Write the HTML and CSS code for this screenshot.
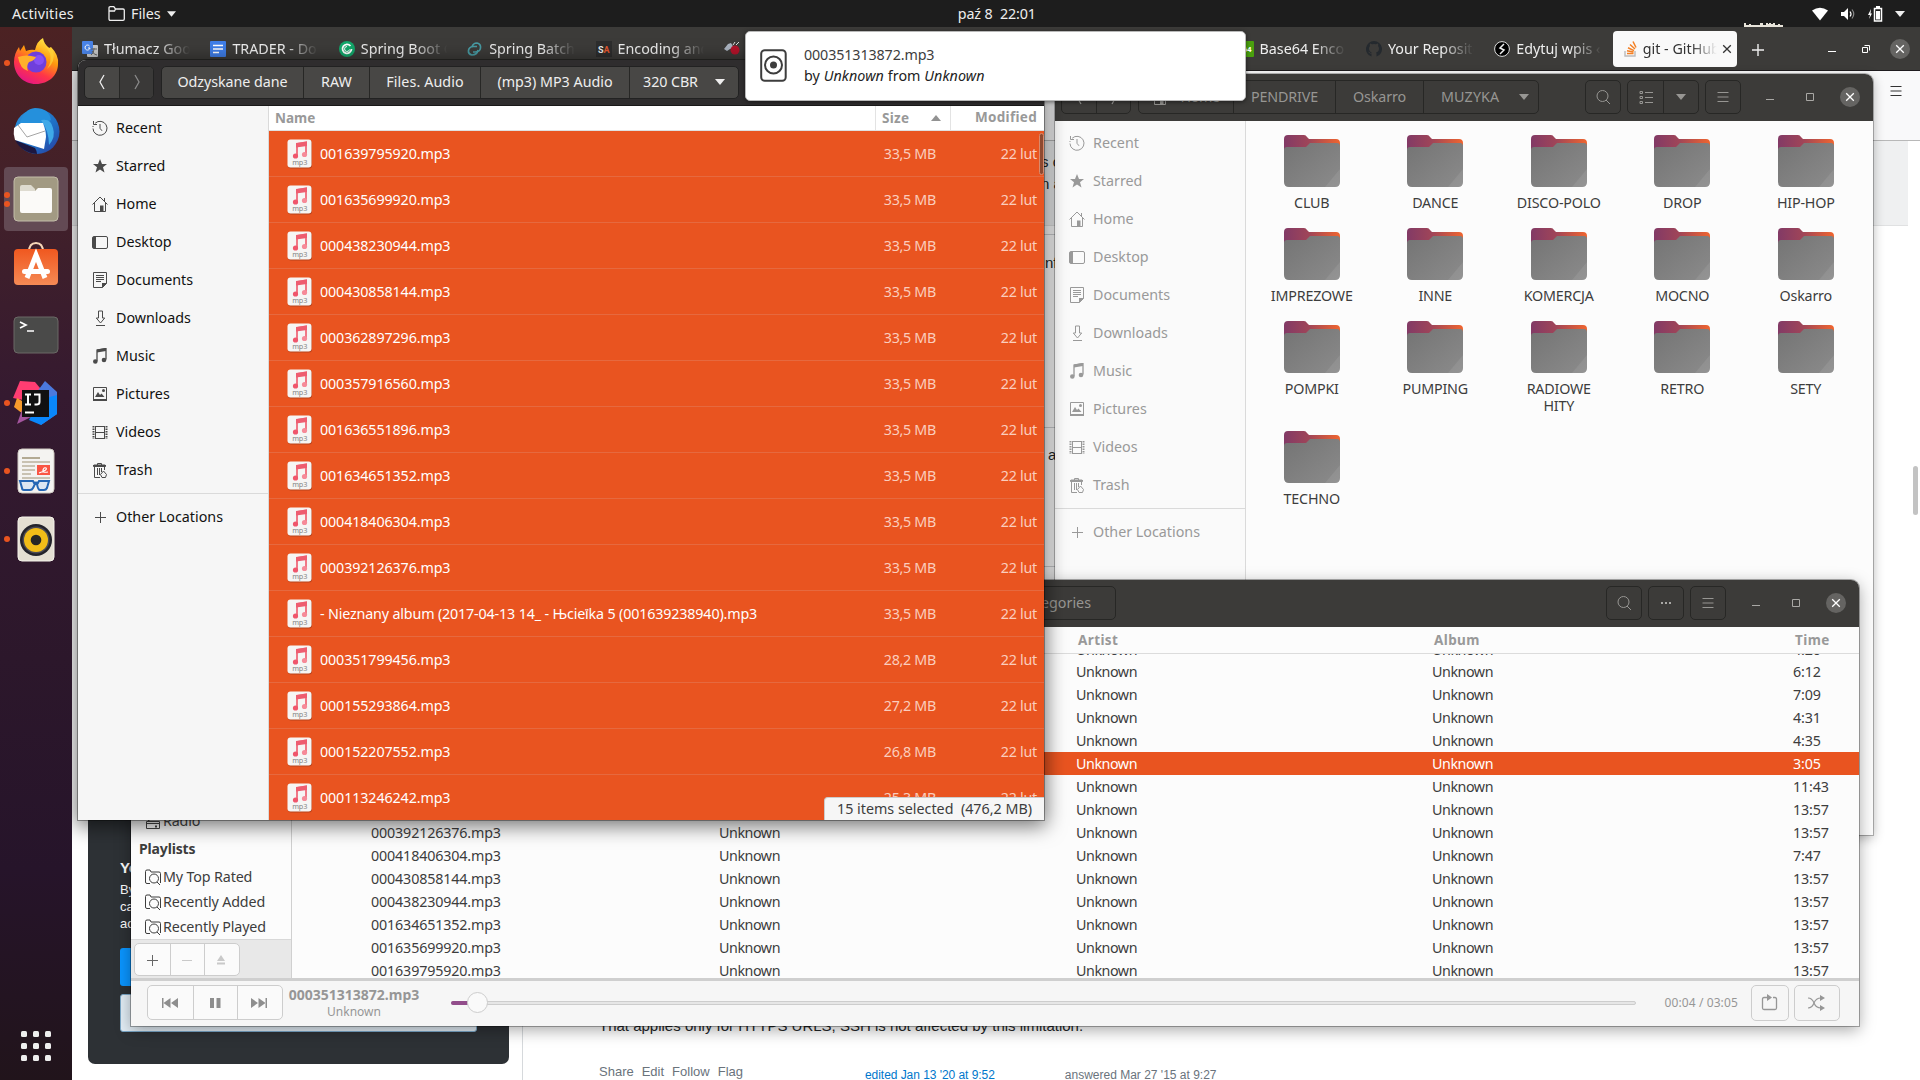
FILE: index.html
```html
<!DOCTYPE html>
<html lang="en">
<head>
<meta charset="utf-8">
<title>Desktop</title>
<link rel="stylesheet" href="styles.css">
</head>
<body>
<svg class="sprite" xmlns="http://www.w3.org/2000/svg">
  <defs>
    <linearGradient id="gBack" x1="0" y1="0" x2="1" y2="0"><stop offset="0" stop-color="#823a66"/><stop offset=".45" stop-color="#a04558"/><stop offset="1" stop-color="#f0652f"/></linearGradient>
    <linearGradient id="gFront" x1="0" y1="0" x2="1" y2="1"><stop offset="0" stop-color="#747474"/><stop offset="1" stop-color="#8b8b8b"/></linearGradient>
    <linearGradient id="gFox" x1=".8" y1="0" x2=".3" y2="1"><stop offset="0" stop-color="#fff44f"/><stop offset=".4" stop-color="#ff980e"/><stop offset=".7" stop-color="#ff3647"/><stop offset="1" stop-color="#e31587"/></linearGradient>
    <linearGradient id="gOr" x1="0" y1="0" x2="0" y2="1"><stop offset="0" stop-color="#f0581f"/><stop offset="1" stop-color="#f58a55"/></linearGradient>
    <linearGradient id="gTb" x1="0" y1="0" x2="1" y2="1"><stop offset="0" stop-color="#2c93dc"/><stop offset=".6" stop-color="#1f6fc4"/><stop offset="1" stop-color="#2a3a9c"/></linearGradient>
  </defs>
  <symbol id="recent" viewBox="0 0 16 16"><g fill="none" stroke="currentColor"><path d="M3.2 3.2A7 7 0 1 1 1 8.500" /><path d="M8 4v4.300l2 2.500"/><path d="M1.500 1v3.500H5" /><path d="M1 6v1.500" stroke-dasharray="1"/></g></symbol>
  <symbol id="star" viewBox="0 0 16 16"><path fill="currentColor" d="M8 1l2 5h5l-4 3.300 1.500 5.200L8 11.500l-4.500 3L5 9.300 1 6h5z"/></symbol>
  <symbol id="home" viewBox="0 0 16 16"><path fill="none" stroke="currentColor" d="M.500 8.500L8 1l7.500 7.500M2.500 7v8.500h11V7M12.500 2v3"/><path fill="currentColor" d="M8 9.500h3.500V16H8z"/></symbol>
  <symbol id="desktop" viewBox="0 0 16 16"><rect x=".5" y="2.500" width="15" height="12" rx="1.500" fill="none" stroke="currentColor"/><path fill="currentColor" d="M1 3h3v11H1z"/></symbol>
  <symbol id="doc" viewBox="0 0 16 16"><path fill="none" stroke="currentColor" d="M1.500.5h13v11l-4 4h-9zM4 3.500h8M4 5.500h8M4 7.500h8M4 9.500h5"/><path fill="currentColor" d="M10 16v-5h5z"/></symbol>
  <symbol id="down" viewBox="0 0 16 16"><path fill="none" stroke="currentColor" d="M6.500 1h4v7h2.200L8.500 13 4.300 8h2.200zM4 15.500h9"/></symbol>
  <symbol id="music" viewBox="0 0 16 16"><path fill="none" stroke="currentColor" stroke-width="1.300" d="M5 13V2l9-1.500v11"/><path fill="currentColor" d="M5 1.500L14 0v3L5 4.500z"/><circle cx="3.300" cy="13.500" r="2.300" fill="currentColor"/><circle cx="12" cy="12" r="2.300" fill="currentColor"/></symbol>
  <symbol id="pic" viewBox="0 0 16 16"><path fill="none" stroke="currentColor" d="M1.500 1.500h13v13h-13z"/><path fill="currentColor" d="M1 13h14v2H1zM3 11l3-5 2 3 1.500-1.500L12.500 11z"/><circle cx="11.500" cy="4.500" r="1.500" fill="currentColor"/></symbol>
  <symbol id="video" viewBox="0 0 16 16"><path fill="none" stroke="currentColor" d="M3.500 2v13M12.500 2v13M3.500 2.500h9M3.500 8.500h9M3.500 14.500h9"/><path fill="none" stroke="currentColor" stroke-dasharray="1.500 1" stroke-width="2" d="M1.500 2v13M14.500 2v13"/></symbol>
  <symbol id="trash" viewBox="0 0 16 16"><path fill="none" stroke="currentColor" d="M1 3.500h13M2.500 5v10.500H8M12.500 5v3M5.500 3V1.500h4V3M5.500 6v7M7.500 6v7M9.500 6v4"/><path fill="currentColor" d="M2 2.500h11L14 5H1z"/><path fill="none" stroke="currentColor" d="M8.500 12.500l3-3.500 3 3.500-1 3H10z"/></symbol>
  <symbol id="plus" viewBox="0 0 16 16"><path fill="none" stroke="currentColor" d="M8.500 3v11M3 8.500h11"/></symbol>
  <symbol id="search" viewBox="0 0 16 16"><circle cx="7.500" cy="7" r="5.500" fill="none" stroke="currentColor"/><path stroke="currentColor" d="M11 11l4 4"/></symbol>
  <symbol id="menu" viewBox="0 0 16 16"><path fill="none" stroke="currentColor" d="M2.500 3.500h11M2.500 8h11M2.500 12.500h11"/></symbol>
  <symbol id="list" viewBox="0 0 16 16"><path fill="none" stroke="currentColor" d="M2 2.500h2.500v2H2zM2 7.500h2.500v2H2zM2 12.500h2.500v2H2zM7 3.500h8M7 8.500h8M7 13.500h8"/></symbol>
  <symbol id="min" viewBox="0 0 16 16"><path stroke="currentColor" d="M4 10.500h8"/></symbol>
  <symbol id="max" viewBox="0 0 16 16"><path fill="none" stroke="currentColor" d="M4.500 4.500h7v7h-7z"/></symbol>
  <symbol id="restore" viewBox="0 0 16 16"><path fill="none" stroke="currentColor" d="M4.500 6.500h5v5h-5zM6.500 4.500h5v5"/></symbol>
  <symbol id="close" viewBox="0 0 16 16"><path stroke="currentColor" stroke-width="1.300" d="M4.200 4.200l7.600 7.600M11.800 4.200l-7.600 7.600"/></symbol>
  <symbol id="left" viewBox="0 0 16 16"><path fill="none" stroke="currentColor" stroke-width="1.300" d="M10 1L6 8l4 7"/></symbol>
  <symbol id="right" viewBox="0 0 16 16"><path fill="none" stroke="currentColor" stroke-width="1.300" d="M6 1l4 7-4 7"/></symbol>
  <symbol id="tri" viewBox="0 0 10 6"><path fill="currentColor" d="M0 0h10L5 6z"/></symbol>
  <symbol id="folder" viewBox="0 0 56 52">
    <path fill="url(#gBack)" d="M0 4q0-4 4-4h16q2 0 3 2l2 2h27q4 0 4 4v20H0z"/>
    <path fill="url(#gFront)" d="M0 15q0-3 3-3h19l4-4h27q3 0 3 3v36q0 5-5 5H5q-5 0-5-5z"/>
    <path fill="#fff" opacity=".08" d="M56 34v13q0 5-5 5H41z"/>
  </symbol>
  <symbol id="mp3" viewBox="0 0 26 30"><rect x="1" y="1" width="24" height="28.500" rx="3" fill="#b8421b"/><rect x=".5" y=".5" width="24" height="28" rx="3" fill="#f6f5f4"/><path fill="none" stroke="#f07886" stroke-width="2" d="M10 17V5l9-1.500V15"/><path fill="#ee5d70" d="M9 4l11-1.500V7L9 8.500z"/><circle cx="8.500" cy="17" r="2.600" fill="#f0566b"/><circle cx="17.500" cy="15.500" r="2.600" fill="#f68a98"/><text x="12.700" y="25.500" text-anchor="middle" font-family="Noto Sans, sans-serif" font-size="7.300" fill="#858585">mp3</text></symbol>
  <symbol id="smart" viewBox="0 0 16 16"><path fill="none" stroke="currentColor" d="M5 14.500H2q-1.500 0-1.500-1.500V2.500Q.500 1 2 1h3l1 2h8q1.500 0 1.500 1.500V14"/><circle cx="9" cy="9.500" r="4.500" fill="none" stroke="currentColor"/><path stroke="currentColor" d="M12 13l3 3"/></symbol>
</svg>

<header class="topbar">
  <span class="activities">Activities</span>
  <span class="appmenu"><svg width="17" height="15" viewBox="0 0 17 15"><path fill="none" stroke="#eee" stroke-width="1.300" d="M1 13V2q0-1.300 1.300-1.300h3.500L7.500 3H15q1.300 0 1.300 1.300V13q0 1.300-1.300 1.300H2.300Q1 14.300 1 13zM1 5h5.500l1-2"/></svg>Files<svg width="9" height="6"><use href="#tri"/></svg></span>
  <span class="clock">paź 8&nbsp; 22:01</span>
  <svg class="glitch" width="40" height="4" viewBox="0 0 40 4"><path fill="#e8e4da" d="M0 0h2v2h3V1h2v1h9V0h3v2h3V0h2v1h1V0h2v1h2V0h2v2h3V1h2v1h3v2H0z"/></svg>
  <span class="tray">
    <svg width="16" height="14" viewBox="0 0 16 14"><path fill="#fff" d="M0 3.500Q8-2 16 3.500L8 13.500z"/></svg>
    <svg width="16" height="14" viewBox="0 0 16 14"><path fill="#fff" d="M1 5h3l4-4v12L4 9H1z"/><path fill="none" stroke="#fff" stroke-width="1.200" d="M10 4.500q2 2.500 0 5"/><path fill="none" stroke="#888" stroke-width="1.200" d="M12 2.500q3.500 4.500 0 9"/></svg>
    <svg width="15" height="16" viewBox="0 0 15 16"><path fill="none" stroke="#fff" stroke-width="1.500" d="M6.500 2.500h7v12.500h-7z"/><path fill="#fff" d="M8 0h4v2H8zM8 5h4v8.500H8zM3 3L0 9h2l-1 4 3-5.500H2.500z"/></svg>
    <svg width="10" height="6"><use href="#tri"/></svg>
  </span>
</header>

<nav class="dock">
  <div class="slot up1"><i class="dots"><b></b></i><svg width="46" height="47" viewBox="0 0 46 47"><path fill="url(#gFox)" d="M23 46C10 46 1 36 1 24 1 18 3 13 6 9l1 4 4-6 2 6q5-2 9-1 2-9 8-12 1 6 6 10l2-1q8 8 7 17C45 37 36 46 23 46z"/><circle cx="23" cy="24" r="10.500" fill="#6f3fdc"/><circle cx="26" cy="22" r="5" fill="#9059ff" opacity=".7"/><path fill="#ffb02b" d="M5 19q8-3 18 0-2 4-7 5-3 4-1 9-8-2-10-14z"/><path fill="#ffd43a" opacity=".7" d="M30 1q3 9 7 14 2 9-3 16 9-7 6-19-8-3-10-11z"/></svg></div>
  <div class="slot"><svg width="50" height="50" viewBox="0 0 50 50"><circle cx="26" cy="25.500" r="22.500" fill="url(#gTb)"/><path fill="#2590dc" d="M9 17Q13 3 24 2q14 0 16 12l-8 4z"/><path fill="#3fa9e8" d="M30 14q10-2 12 8 3 9-4 17 0-14-8-25z"/><path fill="#1c1740" d="M4 34l20 8q2 3 2 6Q11 47 4 34z"/><path fill="#fff" d="M3 22l7-5 22 0q3 8 3 14l-2 12L4 34q-2-6-1-12z"/><path fill="none" stroke="#a5a5a5" stroke-width="1" d="M7 19l9 12 18-6"/></svg></div>
  <div class="slot active"><i class="dots"><b></b><b></b></i><svg width="46" height="46" viewBox="0 0 46 46"><rect x="1" y="1" width="44" height="44" rx="4" fill="#a29a83" stroke="#c3bda9"/><path fill="#dedbd0" d="M7 11q0-2 2-2h9l4 4v6H7z"/><path fill="#fbfaf8" d="M7 15h15l3-3h12q2 0 2 2v21q0 2-2 2H9q-2 0-2-2z"/></svg></div>
  <div class="slot up3"><svg width="46" height="46" viewBox="0 0 46 46"><path fill="none" stroke="#f7d7b8" stroke-width="2" d="M16 11q0-9 7-9t7 9"/><rect x="1" y="8" width="44" height="36" rx="4" fill="url(#gOr)"/><path fill="none" stroke="#fff" stroke-width="5" d="M14 37l9-23 9 23"/><rect x="9" y="28" width="28" height="5" rx="2.500" fill="#fff"/></svg></div>
  <div class="slot"><svg width="46" height="38" viewBox="0 0 46 38"><rect x="1" y="1" width="44" height="36" rx="4" fill="#4a4a49" stroke="#6b6966"/><path fill="none" stroke="#fff" stroke-width="1.700" d="M7 6l6 3-6 3M14 15h7"/></svg></div>
  <div class="slot"><i class="dots"><b></b></i><svg width="46" height="46" viewBox="0 0 46 46"><path fill="#ff3d72" d="M7 1l15 1 10 12-12 8L0 18z"/><path fill="#4b79dd" d="M32 1l12 11v22L28 45 18 20z"/><path fill="#0a87fb" d="M44 15v19L28 45 16 40l10-20z"/><path fill="#f69a2c" d="M4 18l10 6-4 10L1 27z"/><path fill="#a4559e" d="M10 27l12 8L4 44z"/><rect x="9" y="10" width="27" height="27" fill="#111"/><path fill="none" stroke="#fff" stroke-width="2" d="M12 14.500h6M15 14v10M12 24.500h6M21 14.500h5.500V22q0 2.500-3 2.500h-2M12 32.500h9"/></svg></div>
  <div class="slot"><i class="dots"><b></b></i><svg width="38" height="46" viewBox="0 0 38 46"><rect x="1" y="1" width="36" height="44" rx="4" fill="#f4f3f1" stroke="#cfcac2"/><path stroke="#b3aa93" stroke-width="2" d="M5 10h18"/><path stroke="#c9c2b2" stroke-width="2" d="M5 14h28M5 18h13M5 22h13M5 26h9M5 30h28"/><rect x="20" y="17" width="13" height="10" fill="#fa5543"/><path fill="none" stroke="#fff" stroke-width="1.200" d="M22 25q9-3 7-5-2-1-3 2t5 2"/><path fill="#dde7f2" stroke="#2567b5" stroke-width="2" d="M3 33h13l1 2q2-1 4 0l1-2h10l-2 7q-1 2-3 2h-4q-2 0-3-6h-2l-2 4q-1 2-3 2H7q-2 0-2-2z"/></svg></div>
  <div class="slot"><i class="dots"><b></b></i><svg width="38" height="46" viewBox="0 0 38 46"><rect x="1" y="1" width="36" height="44" rx="4" fill="#e4dfd3" stroke="#f5f2ea"/><circle cx="19" cy="24" r="16" fill="#23232b"/><circle cx="19" cy="24" r="13.500" fill="#4a4a55"/><circle cx="19" cy="24" r="12" fill="#f1bc18"/><circle cx="19" cy="24" r="5.300" fill="#262626"/></svg></div>
  <svg class="apps" width="31" height="31" viewBox="0 0 31 31"><g fill="#eee"><rect width="6" height="6" rx="1.500"/><rect x="12" width="6" height="6" rx="1.500"/><rect x="24" width="6" height="6" rx="1.500"/><rect y="12" width="6" height="6" rx="1.500"/><rect x="12" y="12" width="6" height="6" rx="1.500"/><rect x="24" y="12" width="6" height="6" rx="1.500"/><rect y="24" width="6" height="6" rx="1.500"/><rect x="12" y="24" width="6" height="6" rx="1.500"/><rect x="24" y="24" width="6" height="6" rx="1.500"/></g></svg>
</nav>

<main class="browser">
  <div class="tabs">
    <div class="tab"><svg width="16" height="16" viewBox="0 0 16 16"><rect x="5" y="4" width="11" height="12" rx="1" fill="#c9c9c9"/><rect width="11" height="13" rx="1" fill="#4a84e8"/><path fill="none" stroke="#fff" d="M7.500 5A2.500 2.500 0 1 0 8 7H6"/><path stroke="#666" fill="none" d="M9 8h6M12 7v1q0 4-3 6M10 10q2 4 5 4"/></svg><span>Tłumacz Goo</span></div>
    <div class="tab"><svg width="16" height="16" viewBox="0 0 16 16"><rect width="16" height="16" rx="1" fill="#3f7ee8"/><path stroke="#fff" stroke-width="1.600" d="M3 4.500h10M3 8h10M3 11.500h6"/></svg><span>TRADER - Do</span></div>
    <div class="tab"><svg width="16" height="16" viewBox="0 0 16 16"><circle cx="8" cy="8" r="8" fill="#13a86b"/><path fill="none" stroke="#fff" stroke-width="1.800" d="M11.500 5A4.500 4.500 0 1 0 12.500 8"/><path fill="none" stroke="#fff" d="M8 5.500a2.500 2.500 0 1 0 2.500 3"/></svg><span>Spring Boot C</span></div>
    <div class="tab"><svg width="16" height="16" viewBox="0 0 16 16"><g fill="none" stroke="#489ba3" stroke-width="1.700"><path d="M5 6q1-4 5-4 4 1 3.500 5T8 11H6"/><path d="M11 9q-1 5-6 5-4-1-3.500-4.500T6 5.500h4"/></g></svg><span>Spring Batch</span></div>
    <div class="tab"><svg width="16" height="16" viewBox="0 0 16 16"><rect width="16" height="16" fill="#2d2d2d"/><text x="2" y="11.500" font-family="Roboto, sans-serif" font-size="9" font-weight="700" fill="#eee">S<tspan fill="#e4572e">A</tspan></text></svg><span>Encoding and</span></div>
    <div class="tab"><svg width="16" height="16" viewBox="0 0 16 16"><path fill="#aab3c0" d="M0 8l4-5 3-1 3 5-4 1-3 2z"/><circle cx="11" cy="9" r="4.500" fill="#b3132a"/><path stroke="#ddd" d="M9 4l2-3M12 4l3-3"/></svg></div>
    <div class="tab-gap"></div>
    <div class="tab"><svg width="16" height="16" viewBox="0 0 16 16"><rect width="16" height="16" rx="1" fill="#4aa00e"/><text x="4.500" y="11" font-family="Roboto, sans-serif" font-size="8" font-weight="700" fill="#fff">64</text></svg><span>Base64 Enco</span></div>
    <div class="tab"><svg width="16" height="16" viewBox="0 0 16 16"><path fill="#24292e" d="M8 0a8 8 0 0 0-2.500 15.600v-3Q3 13 2 10.500q2 .5 2.500 1.500l1.500-.5Q3 11 3 7.500 3 6 4 5q-.5-1 0-2.500Q5 2.500 6 3.200q2-.5 4 0 1-.7 2-.7.500 1.500 0 2.500 1 1 1 2.500 0 3.500-3 4 .5.500.5 1.500v2.600A8 8 0 0 0 8 0z"/></svg><span>Your Reposito</span></div>
    <div class="tab"><svg width="16" height="16" viewBox="0 0 16 16"><circle cx="8" cy="8" r="7.400" fill="#000" stroke="#ddd"/><path fill="none" stroke="#eee" stroke-width="1.500" d="M10 3L6 7l4 2-4 4"/></svg><span>Edytuj wpis ‹</span></div>
    <div class="tab cur"><svg width="16" height="16" viewBox="0 0 16 16"><path fill="none" stroke="#bcbbbb" stroke-width="1.400" d="M2 10v5h10v-5"/><path fill="none" stroke="#f48024" stroke-width="1.500" d="M4 12.500h6.500M4 9.800l6.500 1.200M5 6.800l6 2.800M7 3.500l5 4.500M10 .5l3 6"/></svg><span>git - GitHub</span><svg class="x" width="16" height="16"><use href="#close"/></svg></div>
    <svg class="newtab" width="14" height="14" viewBox="0 0 14 14"><path stroke="#eee" stroke-width="1.400" d="M7 1v12M1 7h12"/></svg>
    <div class="wm"><svg width="16" height="16"><use href="#min"/></svg><svg width="16" height="16"><use href="#restore"/></svg><span class="closer"><svg width="16" height="16"><use href="#close"/></svg></span></div>
  </div>
  <div class="toolbar"><svg width="16" height="16"><use href="#menu"/></svg></div>
  <div class="page">
    <div class="band"><p>s c</p><p>n a</p></div>
    <div class="frag one">nfi</div>
    <div class="frag two">a</div>
    <div class="cols">
      <aside class="teams"><h4>Yo</h4><p>By</p><p>ca</p><p>ac</p><div class="blue"></div><div class="pale"></div></aside>
      <article class="answer">
        <p>That applies only for HTTPS URLS, SSH is not affected by this limitation.</p>
        <div class="post-menu"><span>Share</span><span>Edit</span><span>Follow</span><span>Flag</span><span class="edited">edited Jan 13 '20 at 9:52</span><span class="answered">answered Mar 27 '15 at 9:27</span></div>
      </article>
    </div>
  </div>
  <div class="thumb"></div>
</main>

<section class="win back-files">
  <div class="hb">
    <div class="grp nav"><span><svg width="16" height="16"><use href="#left"/></svg></span><span><svg width="16" height="16"><use href="#right"/></svg></span></div>
    <div class="grp path"><span class="b1"><svg width="16" height="16"><use href="#home"/></svg>Home</span><span class="b2">PENDRIVE</span><span class="b3">Oskarro</span><span class="b4">MUZYKA<svg width="10" height="6"><use href="#tri"/></svg></span></div>
    <div class="grp one first"><span><svg width="16" height="16"><use href="#search"/></svg></span></div>
    <div class="grp two"><span><svg width="16" height="16"><use href="#list"/></svg></span><span><svg width="10" height="6"><use href="#tri"/></svg></span></div>
    <div class="grp one"><span><svg width="16" height="16"><use href="#menu"/></svg></span></div>
    <div class="wm"><svg width="16" height="16"><use href="#min"/></svg><svg width="16" height="16"><use href="#max"/></svg><span class="closer"><svg width="16" height="16"><use href="#close"/></svg></span></div>
  </div>
  <div class="body">
    <ul class="places">
      <li><svg><use href="#recent"/></svg>Recent</li><li><svg><use href="#star"/></svg>Starred</li><li><svg><use href="#home"/></svg>Home</li><li><svg><use href="#desktop"/></svg>Desktop</li><li><svg><use href="#doc"/></svg>Documents</li><li><svg><use href="#down"/></svg>Downloads</li><li><svg><use href="#music"/></svg>Music</li><li><svg><use href="#pic"/></svg>Pictures</li><li><svg><use href="#video"/></svg>Videos</li><li><svg><use href="#trash"/></svg>Trash</li>
      <li class="other"><svg><use href="#plus"/></svg>Other Locations</li>
    </ul>
    <div class="icons">
      <figure><svg><use href="#folder"/></svg>CLUB</figure><figure><svg><use href="#folder"/></svg>DANCE</figure><figure><svg><use href="#folder"/></svg>DISCO-POLO</figure><figure><svg><use href="#folder"/></svg>DROP</figure><figure><svg><use href="#folder"/></svg>HIP-HOP</figure>
      <figure><svg><use href="#folder"/></svg>IMPREZOWE</figure><figure><svg><use href="#folder"/></svg>INNE</figure><figure><svg><use href="#folder"/></svg>KOMERCJA</figure><figure><svg><use href="#folder"/></svg>MOCNO</figure><figure><svg><use href="#folder"/></svg>Oskarro</figure>
      <figure><svg><use href="#folder"/></svg>POMPKI</figure><figure><svg><use href="#folder"/></svg>PUMPING</figure><figure><svg><use href="#folder"/></svg>RADIOWE<br>HITY</figure><figure><svg><use href="#folder"/></svg>RETRO</figure><figure><svg><use href="#folder"/></svg>SETY</figure>
      <figure><svg><use href="#folder"/></svg>TECHNO</figure>
    </div>
  </div>
</section>

<section class="win player">
  <div class="hb">
    <div class="grp cat"><span>Categories</span></div>
    <div class="grp one first"><span><svg width="16" height="16"><use href="#search"/></svg></span></div>
    <div class="grp one"><span><svg width="16" height="16" viewBox="0 0 16 16"><path fill="#a9a8a5" d="M3 7h2v2H3zM7 7h2v2H7zM11 7h2v2h-2z"/></svg></span></div>
    <div class="grp one"><span><svg width="16" height="16"><use href="#menu"/></svg></span></div>
    <div class="wm"><svg width="16" height="16"><use href="#min"/></svg><svg width="16" height="16"><use href="#max"/></svg><span class="closer"><svg width="16" height="16"><use href="#close"/></svg></span></div>
  </div>
  <div class="body">
    <div class="sources">
      <div class="radio"><svg width="16" height="18" viewBox="0 0 16 18"><path fill="none" stroke="currentColor" d="M1.500 9.500h13v7h-13zM1.500 11.500h13M3 9L11 3"/><path stroke="currentColor" stroke-width="2" d="M10 14.500h2"/></svg>Radio</div>
      <h3>Playlists</h3>
      <div><svg width="16" height="16"><use href="#smart"/></svg>My Top Rated</div>
      <div><svg width="16" height="16"><use href="#smart"/></svg>Recently Added</div>
      <div><svg width="16" height="16"><use href="#smart"/></svg>Recently Played</div>
      <footer><span class="trio"><b><svg width="16" height="16"><use href="#plus"/></svg></b><b class="off"><svg width="16" height="16" viewBox="0 0 16 16"><path stroke="currentColor" d="M3 8.500h10"/></svg></b><b class="off"><svg width="16" height="16" viewBox="0 0 16 16"><path fill="currentColor" d="M8 3l4 6H4zM4 10.500h8v2H4z"/></svg></b></span></footer>
    </div>
    <div class="songs">
      <div class="cols-head"><span></span><span></span><span>Artist</span><span>Album</span><span>Time</span></div>
      <div class="rows">
        <p><span></span><span></span><span>Unknown</span><span>Unknown</span><span>4:20</span></p>
        <p><span></span><span></span><span>Unknown</span><span>Unknown</span><span>6:12</span></p>
        <p><span></span><span></span><span>Unknown</span><span>Unknown</span><span>7:09</span></p>
        <p><span></span><span></span><span>Unknown</span><span>Unknown</span><span>4:31</span></p>
        <p><span></span><span></span><span>Unknown</span><span>Unknown</span><span>4:35</span></p>
        <p class="sel"><span></span><span></span><span>Unknown</span><span>Unknown</span><span>3:05</span></p>
        <p><span></span><span></span><span>Unknown</span><span>Unknown</span><span>11:43</span></p>
        <p><span></span><span></span><span>Unknown</span><span>Unknown</span><span>13:57</span></p>
        <p><span>000392126376.mp3</span><span>Unknown</span><span>Unknown</span><span>Unknown</span><span>13:57</span></p>
        <p><span>000418406304.mp3</span><span>Unknown</span><span>Unknown</span><span>Unknown</span><span>7:47</span></p>
        <p><span>000430858144.mp3</span><span>Unknown</span><span>Unknown</span><span>Unknown</span><span>13:57</span></p>
        <p><span>000438230944.mp3</span><span>Unknown</span><span>Unknown</span><span>Unknown</span><span>13:57</span></p>
        <p><span>001634651352.mp3</span><span>Unknown</span><span>Unknown</span><span>Unknown</span><span>13:57</span></p>
        <p><span>001635699920.mp3</span><span>Unknown</span><span>Unknown</span><span>Unknown</span><span>13:57</span></p>
        <p><span>001639795920.mp3</span><span>Unknown</span><span>Unknown</span><span>Unknown</span><span>13:57</span></p>
      </div>
    </div>
  </div>
  <div class="controls">
    <span class="trio big"><b><svg width="16" height="16" viewBox="0 0 16 16"><path fill="currentColor" d="M0 3h1.500v10H0zM8.500 3v10L1.500 8zM16 3v10L9 8z"/></svg></b><b><svg width="16" height="16" viewBox="0 0 16 16"><path fill="currentColor" d="M3 3h4v10H3zM9.500 3h4v10h-4z"/></svg></b><b><svg width="16" height="16" viewBox="0 0 16 16"><path fill="currentColor" d="M14.500 3H16v10h-1.500zM0 3l7 5-7 5zM7.500 3l7 5-7 5z"/></svg></b></span>
    <div class="now"><strong>000351313872.mp3</strong><span>Unknown</span></div>
    <div class="track"><i></i><em></em></div>
    <span class="time">00:04 / 03:05</span>
    <span class="btn"><svg width="18" height="18" viewBox="0 0 18 18"><path fill="none" stroke="currentColor" stroke-width="1.300" d="M7 3.500H3Q1.500 3.500 1.500 5v9q0 1.500 1.500 1.500h11q1.500 0 1.500-1.500V5q0-1.500-1.500-1.500h-2"/><path fill="currentColor" d="M6 0l5 3.500L6 7z"/></svg></span>
    <span class="btn wide"><svg width="17" height="16" viewBox="0 0 17 16"><path fill="none" stroke="currentColor" stroke-width="1.200" d="M0 3q4 0 6 5t7 5M0 13q4 0 6-5t7-5"/><path fill="currentColor" d="M12 0l5 3-5 3zM12 10l5 3-5 3z"/></svg></span>
  </div>
</section>

<section class="win front-files">
  <div class="hb">
    <div class="grp nav"><span><svg width="16" height="16"><use href="#left"/></svg></span><span class="dis"><svg width="16" height="16"><use href="#right"/></svg></span></div>
    <div class="grp path"><span class="a1">Odzyskane dane</span><span class="a2">RAW</span><span class="a3">Files. Audio</span><span class="a4">(mp3) MP3 Audio</span><span class="a5">320 CBR<svg width="10" height="6"><use href="#tri"/></svg></span></div>
  </div>
  <div class="body">
    <ul class="places">
      <li><svg><use href="#recent"/></svg>Recent</li><li><svg><use href="#star"/></svg>Starred</li><li><svg><use href="#home"/></svg>Home</li><li><svg><use href="#desktop"/></svg>Desktop</li><li><svg><use href="#doc"/></svg>Documents</li><li><svg><use href="#down"/></svg>Downloads</li><li><svg><use href="#music"/></svg>Music</li><li><svg><use href="#pic"/></svg>Pictures</li><li><svg><use href="#video"/></svg>Videos</li><li><svg><use href="#trash"/></svg>Trash</li>
      <li class="other"><svg><use href="#plus"/></svg>Other Locations</li>
    </ul>
    <div class="files">
      <div class="fhead"><span>Name</span><span class="sz">Size<svg width="10" height="6" viewBox="0 0 10 6"><path fill="#929292" d="M0 6h10L5 0z"/></svg></span><span class="md">Modified</span></div>
      <div class="frows">
        <p><svg><use href="#mp3"/></svg><span>001639795920.mp3</span><span>33,5 MB</span><span>22 lut</span></p>
        <p><svg><use href="#mp3"/></svg><span>001635699920.mp3</span><span>33,5 MB</span><span>22 lut</span></p>
        <p><svg><use href="#mp3"/></svg><span>000438230944.mp3</span><span>33,5 MB</span><span>22 lut</span></p>
        <p><svg><use href="#mp3"/></svg><span>000430858144.mp3</span><span>33,5 MB</span><span>22 lut</span></p>
        <p><svg><use href="#mp3"/></svg><span>000362897296.mp3</span><span>33,5 MB</span><span>22 lut</span></p>
        <p><svg><use href="#mp3"/></svg><span>000357916560.mp3</span><span>33,5 MB</span><span>22 lut</span></p>
        <p><svg><use href="#mp3"/></svg><span>001636551896.mp3</span><span>33,5 MB</span><span>22 lut</span></p>
        <p><svg><use href="#mp3"/></svg><span>001634651352.mp3</span><span>33,5 MB</span><span>22 lut</span></p>
        <p><svg><use href="#mp3"/></svg><span>000418406304.mp3</span><span>33,5 MB</span><span>22 lut</span></p>
        <p><svg><use href="#mp3"/></svg><span>000392126376.mp3</span><span>33,5 MB</span><span>22 lut</span></p>
        <p><svg><use href="#mp3"/></svg><span class="long">- Nieznany album (2017-04-13 14_ - Њcieїka 5 (001639238940).mp3</span><span>33,5 MB</span><span>22 lut</span></p>
        <p><svg><use href="#mp3"/></svg><span>000351799456.mp3</span><span>28,2 MB</span><span>22 lut</span></p>
        <p><svg><use href="#mp3"/></svg><span>000155293864.mp3</span><span>27,2 MB</span><span>22 lut</span></p>
        <p><svg><use href="#mp3"/></svg><span>000152207552.mp3</span><span>26,8 MB</span><span>22 lut</span></p>
        <p><svg><use href="#mp3"/></svg><span>000113246242.mp3</span><span>25,3 MB</span><span>22 lut</span></p>
      </div>
      <div class="sbar"></div>
      <div class="status">15 items selected&nbsp; (476,2 MB)</div>
    </div>
  </div>
</section>

<aside class="toast">
  <svg width="27" height="33" viewBox="0 0 27 33"><rect x="1.200" y="1.200" width="24.500" height="30.500" rx="3.500" fill="none" stroke="#3d3d3d" stroke-width="2"/><circle cx="13.500" cy="16" r="8.500" fill="none" stroke="#3d3d3d" stroke-width="2"/><circle cx="13.500" cy="16" r="3.500" fill="#3d3d3d"/></svg>
  <div><p class="t1">000351313872.mp3</p><p class="t2">by <em>Unknown</em> from <em>Unknown</em></p></div>
</aside>
</body>
</html>
```
FILE: styles.css
```css
* { box-sizing: border-box; }
html, body { margin: 0; width: 1920px; height: 1080px; overflow: hidden; }
body { position: relative; background: #fff; font: 14.3px/20px "Noto Sans", "Open Sans", sans-serif; color: #3d3d3d; white-space: nowrap; }
p, h3, h4, ul, figure { margin: 0; padding: 0; list-style: none; }
svg { display: block; flex: none; }
.sprite { position: absolute; width: 0; height: 0; }

/* top panel */
.topbar { position: absolute; inset: 0 0 auto 0; height: 27px; background: #1d1d1d; color: #eee; display: flex; align-items: center; padding: 0 15px 0 12px; z-index: 9; }
.activities { width: 96px; letter-spacing: .22px; }
.appmenu { display: flex; align-items: center; gap: 6px; letter-spacing: 0; }
.clock { margin-left: 782px; letter-spacing: -.1px; }
.glitch { position: absolute; left: 1744px; top: 23px; }
.tray { margin-left: auto; display: flex; align-items: center; gap: 12px; }

/* dock */
.dock { position: absolute; left: 0; top: 27px; width: 72px; height: 1053px; padding: 4px 4px 0; display: flex; flex-direction: column; gap: 4px; background: linear-gradient(#4c2223, #41202a 18%, #351a30 35%, #2c172b 60%, #26142a 80%, #21141b); z-index: 8; }
.slot { position: relative; height: 64px; border-radius: 4px; display: flex; align-items: center; justify-content: center; flex: none; }
.slot.active { background: #634a54; }
.up1 { padding-bottom: 3px; }
.up3 { padding-bottom: 6px; }
.dots { position: absolute; left: 0; top: 0; height: 64px; display: flex; flex-direction: column; justify-content: center; gap: 3px; }
.dots b { width: 6px; height: 6px; border-radius: 50%; background: #e95420; }
.apps { margin: auto auto 18px 17px; }

/* browser */
.browser { position: absolute; left: 72px; top: 27px; width: 1848px; height: 1053px; background: #fff; }
.tabs { height: 44px; background: #3c3b39; border-bottom: 1px solid #1f1c1f; display: flex; padding-left: 10px; color: #eee; }
.tab { width: 128.400px; height: 44px; display: flex; align-items: center; gap: 6px; flex: none; }
.tab span { width: 86px; overflow: hidden; padding-bottom: 0; -webkit-mask: linear-gradient(90deg, #000 62%, transparent); mask: linear-gradient(90deg, #000 62%, transparent); }
.tab-gap { width: 385.200px; flex: none; }
.tab.cur { width: 124px; height: 36px; margin: 4px 0 0 -10px; background: #f9f9f9; color: #333; border-radius: 4px; padding-left: 10px; gap: 4px; }
.tab.cur span { width: 74px; -webkit-mask: linear-gradient(90deg, #000 66%, transparent); mask: linear-gradient(90deg, #000 66%, transparent); }
.tab.cur .x { margin-left: -2px; }
.newtab { margin: 16px 0 0 14px; }
.wm { display: flex; align-items: center; color: #a9a8a5; }
.closer { width: 20px; height: 20px; border-radius: 50%; background: #656462; color: #fff; display: flex; align-items: center; justify-content: center; }
.tabs .wm { color: #fff; height: 44px; margin-left: 59px; gap: 18px; }
.tabs .closer { margin-left: -2px; }
.toolbar { height: 70px; background: #f9f9fa; border-bottom: 1px solid #b8b8b8; display: flex; justify-content: flex-end; padding: 12px 16px 0 0; color: #333; }
.page { width: 1836px; height: 939px; font: 15px/22px "Liberation Sans", Arial, sans-serif; color: #242729; }
.band { height: 85px; background: #eff0f1; border-bottom: 1px solid #e0e1e2; padding: 10px 0 0 969px; }
.frag { width: 1100px; border-bottom: 1px solid #cfd1d3; }
.frag.one { margin-top: 8px; height: 194px; border-top: 1px solid #cfd1d3; padding: 17px 0 0 967px; }
.frag.two { padding: 16px 0 0 970px; height: 139px; }
.cols { display: flex; height: 513px; }
.teams { width: 421px; height: 497px; margin-left: 16px; background: #2d3135; border-radius: 0 0 7px 7px; color: #fff; font-size: 13px; line-height: 17px; padding: 291px 32px 0; overflow: hidden; }
.teams h4 { font-size: 15px; margin: 0 0 4px; line-height: 19px; }
.blue { height: 38px; margin-top: 16px; border-radius: 3px; background: #0a95ff; }
.pale { height: 38px; margin-top: 8px; border-radius: 3px; background: #e1ecf4; border: 1px solid #7aa7c7; width: 357px; }
.answer { flex: 1; border-left: 1px solid #d6d9dc; margin-left: 13px; padding: 448px 0 0 76px; }
.post-menu { display: flex; align-items: flex-start; gap: 8px; margin-top: 25px; font-size: 13px; line-height: 20px; color: #6a737c; }
.post-menu .edited { margin: 3px 0 0 114px; font-size: 12px; color: #0077cc; letter-spacing: -.05px; }
.post-menu .answered { margin: 3px 0 0 62px; font-size: 12px; }
.thumb { position: absolute; right: 2px; top: 439px; width: 5px; height: 49px; border-radius: 3px; background: #c3c3c3; }

/* shared window chrome */
.win { position: absolute; display: flex; flex-direction: column; border-radius: 8px 8px 0 0; background: #fcfcfc; }
.hb { display: flex; align-items: center; background: #3c3b39; border-radius: 8px 8px 0 0; color: #979693; flex: none; }
.grp { display: flex; border: 1px solid #272725; border-radius: 5px; flex: none; overflow: hidden; }
.grp span { display: flex; align-items: center; justify-content: center; height: 32px; }
.grp span + span { border-left: 1px solid #272725; }
.body { display: flex; flex: 1; min-height: 0; }
.places { width: 191px; border-right: 1px solid #dadada; flex: none; padding-top: 3px; }
.places li { height: 38px; display: flex; align-items: center; gap: 8px; padding-left: 14px; }
.places svg { width: 16px; height: 16px; }
.places .other { margin-top: 4px; height: 47px; border-top: 1px solid #dadada; }

/* background file manager */
.back-files { left: 1055px; top: 74px; width: 818px; height: 761px; box-shadow: 0 0 0 1px rgba(0,0,0,.25), 0 3px 12px rgba(0,0,0,.3); }
.back-files .hb { height: 47px; padding: 0 13px 1px 6px; }
.back-files .places { background: #fafafa; color: #999; }
.nav span { width: 34px; }
.path { margin-left: 7px; }
.back-files .b1 { width: 94px; gap: 12px; letter-spacing: -.4px; }
.back-files .b2 { width: 102px; letter-spacing: -.15px; }
.back-files .b3 { width: 88px; letter-spacing: -.1px; }
.back-files .b4 { width: 115px; justify-content: flex-start; padding-left: 17px; gap: 20px; letter-spacing: .1px; }
.one span { width: 34px; }
.two span { width: 35px; }
.one { margin-left: 6px; }
.two { margin-left: 6px; }
.back-files .first { margin-left: 46px; }
.hb .wm { margin-left: auto; gap: 24px; }
.hb .closer { margin-left: -2px; }
.icons { flex: 1; display: grid; grid-template-columns: repeat(5, 123.500px); grid-template-rows: 93px 93px 110px 93px; padding: 14px 0 0 4px; text-align: center; line-height: 17px; letter-spacing: -.2px; }
.icons figure { display: flex; flex-direction: column; align-items: center; }
.icons svg { width: 56px; height: 52px; margin-bottom: 7px; }

/* music player */
.player { left: 131px; top: 580px; width: 1728px; height: 446px; box-shadow: 0 0 0 1px rgba(0,0,0,.3), 0 4px 16px rgba(0,0,0,.35); }
.player .hb { height: 47px; padding: 0 13px 1px 840px; }
.cat { width: 145px; justify-content: flex-end; }
.cat span { padding-right: 24px; }
.player .first { margin-left: 490px; }
.player .body { height: 351px; flex: none; }
.sources { width: 161px; border-right: 1px solid #d0d0d0; display: flex; flex-direction: column; padding-top: 182px; letter-spacing: -.15px; }
.sources > div { height: 25px; display: flex; align-items: center; gap: 2px; padding-left: 14px; flex: none; }
.sources .radio { height: 24px; color: #444; }
.sources h3 { font-size: 14px; line-height: 31px; padding-left: 8px; flex: none; }
.sources footer { margin-top: auto; height: 41px; background: #e8e8e8; border-top: 1px solid #d8d8d8; padding: 3px; }
.trio { display: inline-flex; border: 1px solid #cdcdcd; border-radius: 5px; background: #fbfbfb; color: #666; vertical-align: top; }
.trio b { width: 34.500px; height: 31px; padding-right: 1px; display: flex; align-items: center; justify-content: center; }
.trio b + b { border-left: 1px solid #cdcdcd; }
.trio .off { color: #c9c9c9; }
.songs { flex: 1; display: flex; flex-direction: column; }
.cols-head, .rows p { display: grid; grid-template-columns: 348px 357px 356px 361px 66px; padding-left: 79px; }
.cols-head { height: 27px; border-bottom: 1px solid #dcdcdc; font-weight: 700; color: #999; font-size: 13.500px; letter-spacing: .4px; align-items: center; flex: none; }
.cols-head span { padding-left: 2px; }
.rows { height: 323px; overflow: hidden; letter-spacing: -.45px; }
.rows span:first-child, .rows span:last-child { letter-spacing: -.15px; }
.rows p { height: 23px; line-height: 23px; }
.rows p:first-child { margin-top: -17px; line-height: 26px; }
.rows .sel { background: #e95420; color: #fff; }
.controls { height: 48px; border-top: 3px solid #cfcfcf; background: #f6f6f6; display: flex; align-items: center; padding: 0 19px 2px 16px; color: #969696; }
.big b { width: 44.500px; height: 33px; }
.big { color: #8e8e8e; background: #fafafa; }
.now { width: 133px; margin-left: 5px; text-align: center; display: flex; flex-direction: column; }
.now strong { font-size: 14px; line-height: 17px; margin-top: 1px; }
.now span { font-size: 12px; line-height: 18px; }
.track { position: relative; width: 1185px; height: 4px; margin-left: 30px; border: 1px solid #cdcdcd; border-radius: 2px; background: #e6e6e6; }
.track i { position: absolute; left: -1px; top: -1px; width: 18px; height: 4px; border-radius: 2px; background: #924d8b; }
.track em { position: absolute; left: 15px; top: -10px; width: 21px; height: 21px; border-radius: 50%; background: #fafafa; border: 1px solid #cdcdcd; }
.time { margin-left: 29px; width: 86px; font-size: 12px; letter-spacing: .1px; }
.btn { width: 38px; height: 36px; border: 1px solid #cdcdcd; border-radius: 5px; display: flex; align-items: center; justify-content: center; flex: none; }
.btn.wide { width: 46px; margin-left: 5px; }

/* foreground file manager */
.front-files { left: 78px; top: 60px; width: 966px; height: 760px; box-shadow: 0 0 0 1px rgba(0,0,0,.35), 0 4px 20px 2px rgba(0,0,0,.55); }
.front-files .hb { height: 46px; padding: 0 6px 1px; background: #2f2d2e; border-bottom: 1px solid #1a1919; color: #eee; }
.front-files .grp { border-color: #222; background: #484745; }
.front-files .grp span { height: 31px; }
.front-files .dis { background: #3a3938; color: #8a8a8a; }
.front-files .a1 { width: 141px; letter-spacing: -.05px; }
.front-files .a2 { width: 66px; }
.front-files .a3 { width: 111px; letter-spacing: .1px; }
.front-files .a4 { width: 149px; letter-spacing: 0; }
.front-files .a5 { width: 109px; gap: 17px; letter-spacing: -.1px; }
.front-files .places { background: #f6f6f6; color: #111; }
.front-files .places svg { color: #4a4a4a; }
.files { position: relative; flex: 1; display: flex; flex-direction: column; background: #fff; }
.fhead { height: 25px; display: flex; align-items: center; border-bottom: 1px solid #e0e0e0; color: #999; font-weight: 700; font-size: 13.500px; padding: 0 7px 1px 6px; flex: none; }
.sz { margin-left: auto; width: 75px; height: 24px; border-left: 1px solid #e3e3e3; display: flex; align-items: center; justify-content: space-between; padding: 0 9px 0 6px; letter-spacing: .3px; }
.md { width: 87px; height: 24px; line-height: 23px; border-left: 1px solid #e3e3e3; text-align: right; letter-spacing: .3px; }
.frows { flex: 1; overflow: hidden; background: #e95420; color: #fff; letter-spacing: -.12px; }
.frows p { height: 46px; border-bottom: 1px solid #e6693f; display: flex; align-items: center; padding: 0 7px 0 18px; }
.frows svg { width: 26px; height: 30px; margin-right: 7px; }
.frows span:nth-of-type(2) { margin-left: auto; color: #fbcdbd; letter-spacing: -.3px; }
.frows span:nth-of-type(3) { width: 101px; text-align: right; color: #fbcdbd; letter-spacing: -.25px; }
.frows .long { letter-spacing: -.16px; }
.sbar { position: absolute; right: 0; top: 27px; width: 5px; height: 42px; background: #8f4930; border: 1px solid #d98a6c; border-radius: 3px; }
.status { position: absolute; right: 0; bottom: 0; width: 220px; height: 23px; background: #f6f6f6; border: 1px solid #ccc; border-width: 1px 0 0 1px; line-height: 22px; text-align: center; letter-spacing: 0; border-radius: 4px 0 0 0; }

/* notification */
.toast { position: absolute; left: 745px; top: 31px; width: 501px; height: 70px; background: #fff; border: 1px solid #b9b9b9; border-radius: 5px; box-shadow: 0 1px 4px rgba(0,0,0,.5); display: flex; align-items: center; padding: 0 0 2px 14px; gap: 17px; z-index: 10; }
.toast p { line-height: 21px; }
.t1 { letter-spacing: -.12px; }
.t2 { letter-spacing: .07px; color: #222; }
```
